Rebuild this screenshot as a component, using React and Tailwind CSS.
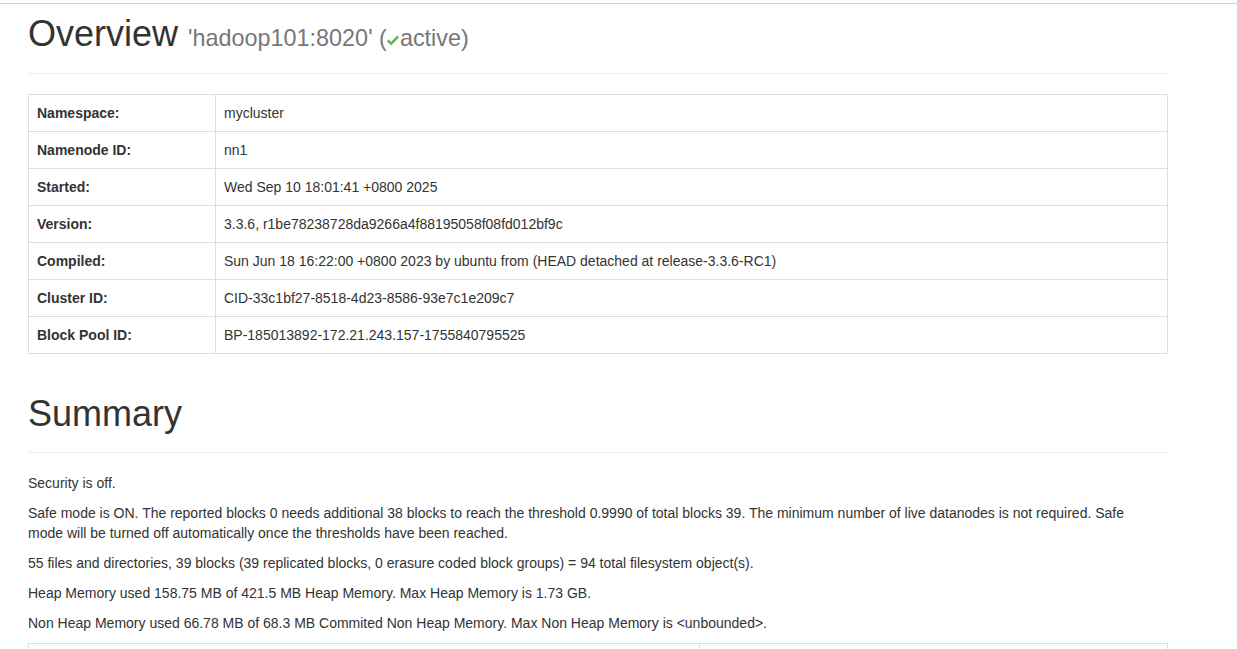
import React from 'react'

/* ─────────────── data ─────────────── */

const overview = [
  ['Namespace:', 'mycluster'],
  ['Namenode ID:', 'nn1'],
  ['Started:', 'Wed Sep 10 18:01:41 +0800 2025'],
  ['Version:', '3.3.6, r1be78238728da9266a4f88195058f08fd012bf9c'],
  ['Compiled:', 'Sun Jun 18 16:22:00 +0800 2023 by ubuntu from (HEAD detached at release-3.3.6-RC1)'],
  ['Cluster ID:', 'CID-33c1bf27-8518-4d23-8586-93e7c1e209c7'],
  ['Block Pool ID:', 'BP-185013892-172.21.243.157-1755840795525'],
]

const summary = [
  'Security is off.',
  <>
    Safe mode is ON. The reported blocks 0 needs additional 38 blocks to reach the threshold 0.9990 of total blocks 39. The minimum number of live datanodes is not required. Safe
    <br />
    mode will be turned off automatically once the thresholds have been reached.
  </>,
  '55 files and directories, 39 blocks (39 replicated blocks, 0 erasure coded block groups) = 94 total filesystem object(s).',
  'Heap Memory used 158.75 MB of 421.5 MB Heap Memory. Max Heap Memory is 1.73 GB.',
  'Non Heap Memory used 66.78 MB of 68.3 MB Commited Non Heap Memory. Max Non Heap Memory is <unbounded>.',
]

// next table starts right at the fold — only its top edge shows
const capacity = [
  ['\u00a0', '\u00a0'],
  ['\u00a0', '\u00a0'],
]

/* ─────────────── bits ─────────────── */

function Check() {
  return (
    <svg
      viewBox="0 0 12 10"
      className="inline-block w-[12px] h-[10px] align-[1px] mr-px"
      aria-hidden="true"
    >
      <path d="M0.8 5.4 L4.2 8.6 L11.2 1.4" fill="none" stroke="#5cb85c" strokeWidth="2.6" />
    </svg>
  )
}

function PageHeader({ children, className = '' }) {
  return (
    <div className={`pb-[9px] border-b border-[#eee] mb-5 ${className}`}>
      <h1 className="text-[36px] leading-[1.1] font-normal mb-[10px]">{children}</h1>
    </div>
  )
}

function InfoTable({ rows, labelWidth }) {
  return (
    <table className="w-full border-collapse border border-[#ddd]">
      <tbody>
        {rows.map(([k, v], i) => (
          <tr key={i}>
            <th
              className="border border-[#ddd] p-2 leading-5 text-left font-bold align-top"
              style={{ width: labelWidth }}
            >
              {k}
            </th>
            <td className="border border-[#ddd] p-2 leading-5 align-top">{v}</td>
          </tr>
        ))}
      </tbody>
    </table>
  )
}

/* ─────────────── page ─────────────── */

export default function App() {
  return (
    <div className="min-h-screen bg-white text-[#333] text-[14px] font-['Liberation_Sans',Arial,sans-serif]">
      <div className="pt-[3px]">
        <div className="h-px bg-[#d0d0d0]" />
      </div>

      <div className="pl-[28px] w-[1168px]">
        <PageHeader className="mt-[10px]">
          Overview{' '}
          <small className="text-[65%] leading-none text-[#777]">
            'hadoop101:8020' (<Check />active)
          </small>
        </PageHeader>

        <InfoTable rows={overview} labelWidth={187} />

        <PageHeader className="mt-10">Summary</PageHeader>

        {summary.map((p, i) => (
          <p key={i} className="leading-5 mb-[10px]">
            {p}
          </p>
        ))}

        <InfoTable rows={capacity} labelWidth={671} />
      </div>
    </div>
  )
}
